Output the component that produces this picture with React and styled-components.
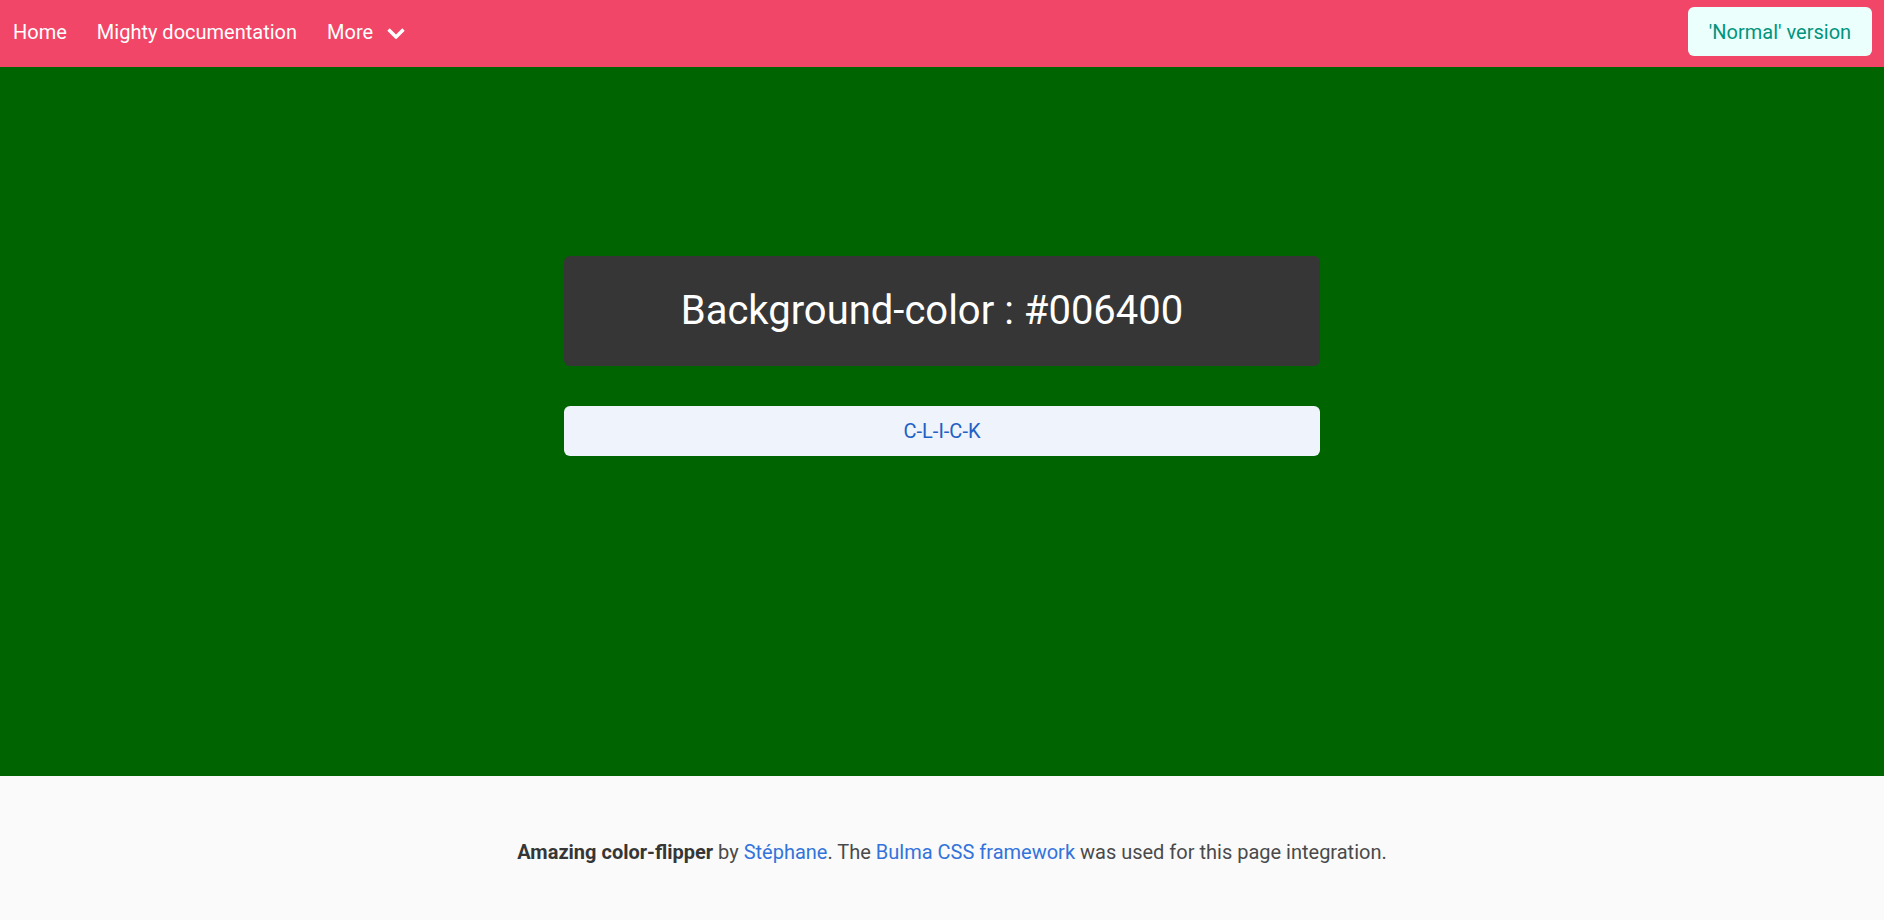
import React, { useState } from "react";
import styled, { createGlobalStyle } from "styled-components";

const GlobalStyle = createGlobalStyle`
    html, body {
        margin: 0;
        padding: 0;
        background: #fafafa;
    }
    body {
        font-family: Roboto, "Noto Sans", "Liberation Sans", sans-serif;
        font-size: 20px;
        line-height: 1.5;
        color: #4a4a4a;
    }
    * {
        box-sizing: border-box;
    }
`;

const colors = ["#006400", "#8b0000", "#00008b", "#4b0082", "#2f4f4f", "#800000"];

function App() {
    const [color, setColor] = useState("#006400");

    const flip = () => {
        const next = colors[Math.floor(Math.random() * colors.length)];
        setColor(next);
    };

    return (
        <>
            <GlobalStyle />
            <Navbar>
                <NavStart>
                    <NavItem href="#">Home</NavItem>
                    <NavItem href="#">Mighty documentation</NavItem>
                    <NavItem href="#">
                        More
                        <Chevron viewBox="0 0 20 11" width="20" height="11">
                            <polyline points="2.5,1.5 10,9 17.5,1.5" />
                        </Chevron>
                    </NavItem>
                </NavStart>
                <NavEnd>
                    <LightButton href="#">'Normal' version</LightButton>
                </NavEnd>
            </Navbar>
            <Main style={{ backgroundColor: color }}>
                <Column>
                    <Notice>
                        <Title>Background-color : {color.toUpperCase()}</Title>
                    </Notice>
                    <ClickButton onClick={flip}>C-L-I-C-K</ClickButton>
                </Column>
            </Main>
            <Footer>
                <FooterText>
                    <strong>Amazing color-flipper</strong> by <Link href="#">Stéphane</Link>. The{" "}
                    <Link href="#">Bulma CSS framework</Link> was used for this page integration.
                </FooterText>
            </Footer>
        </>
    );
}

const Navbar = styled.nav`
    height: 67px;
    background-color: #f14668;
    display: flex;
    align-items: stretch;
    justify-content: space-between;
`;

const NavStart = styled.div`
    display: flex;
    align-items: stretch;
`;

const NavEnd = styled.div`
    display: flex;
    align-items: flex-start;
    padding: 7px 12px 0 0;
`;

const NavItem = styled.a`
    display: flex;
    align-items: center;
    padding: 0 15px 4px;
    color: #fff;
    text-decoration: none;
    font-size: 20px;
    line-height: 1.5;
    white-space: nowrap;

    &:first-child {
        padding-left: 13px;
    }
`;

const Chevron = styled.svg`
    margin-left: 13px;
    margin-top: 4px;
    fill: none;
    stroke: #fff;
    stroke-width: 3.4;
    stroke-linejoin: miter;
`;

const LightButton = styled.a`
    display: inline-flex;
    align-items: center;
    justify-content: center;
    height: 49px;
    width: 184px;
    border-radius: 6px;
    background-color: #ebfffc;
    color: #00947e;
    font-size: 20px;
    text-decoration: none;
`;

const Main = styled.section`
    height: 709px;
    display: flex;
    justify-content: center;
    padding-top: 189px;
`;

const Column = styled.div`
    width: 756px;
    display: flex;
    flex-direction: column;
    gap: 40px;
`;

const Notice = styled.div`
    height: 110px;
    border-radius: 6px;
    background-color: #363636;
    display: flex;
    align-items: center;
    justify-content: center;
    padding: 0 50px 2px 30px;
`;

const Title = styled.h1`
    margin: 0;
    font-size: 40px;
    font-weight: 400;
    line-height: 1.125;
    color: #fff;
`;

const ClickButton = styled.button`
    height: 50px;
    width: 100%;
    border: none;
    border-radius: 6px;
    background-color: #eef3fc;
    color: #2160c4;
    font-family: inherit;
    font-size: 20px;
    cursor: pointer;
`;

const Footer = styled.footer`
    background-color: #fafafa;
    padding: 61px 30px 115px 50px;
`;

const FooterText = styled.p`
    margin: 0;
    text-align: center;
    font-size: 20px;
    line-height: 1.5;
    color: #4a4a4a;

    strong {
        color: #363636;
        font-weight: 700;
    }
`;

const Link = styled.a`
    color: #3273dc;
    text-decoration: none;
`;

export default App;
